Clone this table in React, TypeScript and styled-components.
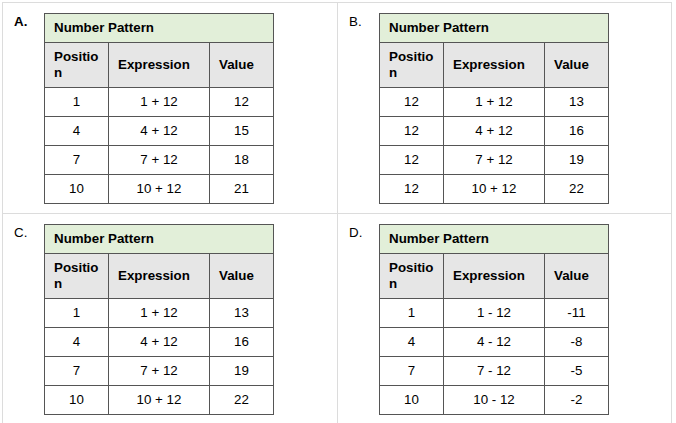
import React from "react";
import styled, { createGlobalStyle } from "styled-components";

const Global = createGlobalStyle`
  html, body { margin: 0; padding: 0; background: #ffffff; }
  body { font-family: "Liberation Sans", Arial, sans-serif; color: #000; }
`;

const Grid = styled.div`
  margin: 2px 0 0 2px;
  display: grid;
  grid-template-columns: 335px 334px;
  grid-auto-rows: 211px;
  border-top: 1px solid #dcdcdc;
  border-left: 1px solid #dcdcdc;
  width: max-content;
`;

const Cell = styled.div`
  display: flex;
  align-items: flex-start;
  padding: 10px 0 0 11px;
  border-right: 1px solid #dcdcdc;
  border-bottom: 1px solid #dcdcdc;
`;

const Label = styled.div<{ $bold?: boolean }>`
  width: 30px;
  flex: none;
  font-size: 13.33px;
  line-height: 18px;
  font-weight: ${(p) => (p.$bold ? 700 : 400)};
`;

const Table = styled.table`
  border-collapse: collapse;
  table-layout: fixed;
  font-size: 13.33px;
  line-height: 16px;
  color: #000;
  td, th {
    border: 1px solid #555555;
  }
`;

const TitleCell = styled.th`
  background: #e2efd9;
  text-align: left;
  font-weight: 700;
  padding: 6px 9px;
`;

const HeadCell = styled.th`
  background: #e6e6e6;
  text-align: left;
  font-weight: 700;
  padding: 6px 3px 6px 9px;
  vertical-align: middle;
  overflow-wrap: anywhere;
`;

const BodyCell = styled.td`
  text-align: center;
  padding: 6px 8px;
  vertical-align: middle;
`;

type Row = [string, string, string];

const options: { label: string; bold?: boolean; rows: Row[] }[] = [
  {
    label: "A.",
    bold: true,
    rows: [
      ["1", "1 + 12", "12"],
      ["4", "4 + 12", "15"],
      ["7", "7 + 12", "18"],
      ["10", "10 + 12", "21"],
    ],
  },
  {
    label: "B.",
    rows: [
      ["12", "1 + 12", "13"],
      ["12", "4 + 12", "16"],
      ["12", "7 + 12", "19"],
      ["12", "10 + 12", "22"],
    ],
  },
  {
    label: "C.",
    rows: [
      ["1", "1 + 12", "13"],
      ["4", "4 + 12", "16"],
      ["7", "7 + 12", "19"],
      ["10", "10 + 12", "22"],
    ],
  },
  {
    label: "D.",
    rows: [
      ["1", "1 - 12", "-11"],
      ["4", "4 - 12", "-8"],
      ["7", "7 - 12", "-5"],
      ["10", "10 - 12", "-2"],
    ],
  },
];

function PatternTable({ rows }: { rows: Row[] }) {
  return (
    <Table>
      <colgroup>
        <col style={{ width: 64 }} />
        <col style={{ width: 101 }} />
        <col style={{ width: 64 }} />
      </colgroup>
      <thead>
        <tr>
          <TitleCell colSpan={3}>Number Pattern</TitleCell>
        </tr>
        <tr>
          <HeadCell>Position</HeadCell>
          <HeadCell>Expression</HeadCell>
          <HeadCell>Value</HeadCell>
        </tr>
      </thead>
      <tbody>
        {rows.map((r, i) => (
          <tr key={i}>
            {r.map((v, j) => (
              <BodyCell key={j}>{v}</BodyCell>
            ))}
          </tr>
        ))}
      </tbody>
    </Table>
  );
}

export default function App() {
  return (
    <>
      <Global />
      <Grid>
        {options.map((o) => (
          <Cell key={o.label}>
            <Label $bold={o.bold}>{o.label}</Label>
            <PatternTable rows={o.rows} />
          </Cell>
        ))}
      </Grid>
    </>
  );
}
